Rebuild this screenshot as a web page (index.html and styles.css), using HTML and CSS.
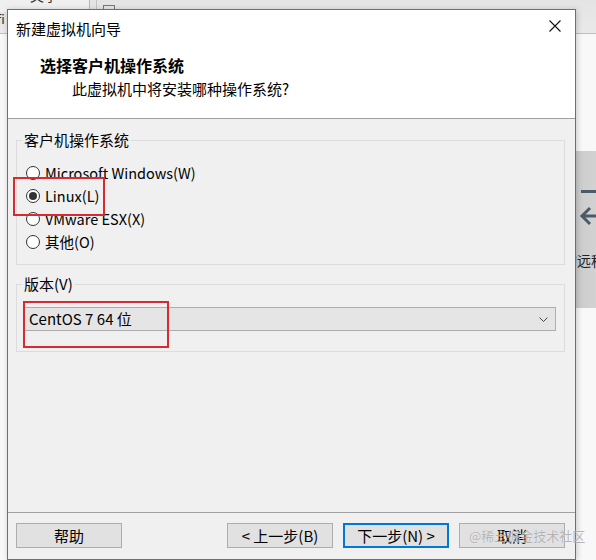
FILE: index.html
```html
<!DOCTYPE html>
<html lang="zh-CN">
<head>
<meta charset="utf-8">
<title>新建虚拟机向导</title>
<link rel="stylesheet" href="styles.css">
</head>
<body>
<div class="desktop">
  <div class="topbar">
    <div class="tab tab-active"><span class="tab-text">文字</span></div>
    <div class="tab tab-other"><span class="tab-icon"></span></div>
  </div>
  <span class="left-glyph">fi</span>
  <div class="side-band">
    <span class="band-bar"></span>
    <svg class="band-arrow" width="20" height="20" viewBox="0 0 20 20"><path d="M11 2 L3 10 L11 18 M3 10 H20" fill="none" stroke="#4b5b69" stroke-width="3"/></svg>
    <span class="band-text">的远程</span>
  </div>

  <div class="window">
    <div class="titlebar">
      <span class="title">新建虚拟机向导</span>
      <svg class="close" width="12" height="12" viewBox="0 0 12 12"><path d="M0.5 0.5 L11.5 11.5 M11.5 0.5 L0.5 11.5" stroke="#111" stroke-width="1.1" fill="none"/></svg>
    </div>
    <div class="header">
      <div class="h-title">选择客户机操作系统</div>
      <div class="h-sub">此虚拟机中将安装哪种操作系统?</div>
    </div>
    <div class="content">
      <div class="group group-os">
        <div class="group-label">客户机操作系统</div>
        <div class="radios">
          <div class="radio-row"><span class="radio"></span><span>Microsoft Windows(W)</span></div>
          <div class="radio-row"><span class="radio checked"></span><span>Linux(L)</span></div>
          <div class="radio-row"><span class="radio"></span><span>VMware ESX(X)</span></div>
          <div class="radio-row"><span class="radio"></span><span>其他(O)</span></div>
        </div>
      </div>
      <div class="group group-ver">
        <div class="group-label">版本(V)</div>
        <div class="select">
          <span>CentOS 7 64 位</span>
          <svg class="chev" width="9" height="5" viewBox="0 0 9 5"><path d="M0.5 0.5 L4.5 4.5 L8.5 0.5" fill="none" stroke="#444" stroke-width="1"/></svg>
        </div>
      </div>
    </div>
    <div class="footer">
      <button class="btn">帮助</button>
      <div class="btn-group">
        <button class="btn">&lt; 上一步(B)</button>
        <button class="btn btn-default">下一步(N) &gt;</button>
        <button class="btn">取消</button>
      </div>
    </div>
  </div>

  <div class="mark mark-linux"></div>
  <div class="mark mark-ver"></div>
  <div class="watermark">@稀土掘金技术社区</div>
</div>
</body>
</html>
```

FILE: styles.css
```css
html, body {
  margin: 0;
  padding: 0;
}
body {
  font-family: "Noto Sans CJK SC", "Noto Sans", sans-serif;
  color: #000;
}
.desktop {
  position: relative;
  width: 596px;
  height: 560px;
  overflow: hidden;
  background: #f8f8f8;
}
.topbar {
  position: absolute;
  left: 0;
  top: 0;
  width: 596px;
  height: 33px;
  background: linear-gradient(#e4e4e4, #e9e9e9);
  border-bottom: 1px solid #a9c4df;
  display: flex;
  align-items: flex-start;
}
.tab {
  height: 12px;
  box-sizing: border-box;
}
.tab-active {
  width: 90px;
  background: #efefef;
  border-right: 1px solid #b8b8b8;
  position: relative;
  overflow: hidden;
}
.tab-text {
  position: absolute;
  left: 30px;
  top: -15px;
  font-size: 14px;
  color: #333;
}
.tab-other {
  margin-left: 6px;
  width: 100px;
  border-left: 1px solid #c4c4c4;
  position: relative;
}
.tab-icon {
  position: absolute;
  left: 6px;
  top: 5px;
  width: 12px;
  height: 10px;
  border: 1px solid #777;
  box-sizing: border-box;
}
.left-glyph {
  position: absolute;
  left: -3px;
  top: 9px;
  font-size: 13px;
  color: #333;
}
.side-band {
  position: absolute;
  left: 560px;
  top: 151px;
  width: 36px;
  height: 157px;
  background: linear-gradient(to right, #b9b9b9, #cbcbcb 40%, #d2d2d2);
}
.band-bar {
  position: absolute;
  left: 21px;
  top: 39px;
  width: 20px;
  height: 3px;
  background: #4b5b69;
}
.band-arrow {
  position: absolute;
  left: 19px;
  top: 55px;
}
.band-text {
  position: absolute;
  left: 3px;
  top: 99px;
  font-size: 14px;
  color: #222;
  white-space: nowrap;
}
.window {
  position: absolute;
  left: 7px;
  top: 9px;
  width: 569px;
  height: 551px;
  box-sizing: border-box;
  border: 1px solid #6f6f6f;
  background: #f0f0f0;
  display: flex;
  flex-direction: column;
  box-shadow: 1px 1px 6px rgba(0, 0, 0, 0.2);
}
.titlebar {
  height: 30px;
  background: #fff;
  display: flex;
  align-items: center;
  justify-content: space-between;
  padding: 7px 14px 0 8px;
  box-sizing: border-box;
  flex-shrink: 0;
}
.title {
  font-size: 15px;
  line-height: 20px;
}
.close {
  display: block;
  margin-top: -6px;
}
.header {
  height: 79px;
  box-sizing: border-box;
  background: #fff;
  border-bottom: 1px solid #a0a0a0;
  padding-top: 15px;
  flex-shrink: 0;
}
.h-title {
  font-size: 16px;
  line-height: 20px;
  font-weight: bold;
  margin-left: 32px;
}
.h-sub {
  font-size: 15px;
  line-height: 20px;
  margin-top: 4px;
  margin-left: 64px;
}
.content {
  flex: 1;
  display: flex;
  flex-direction: column;
}
.group {
  border: 1px solid #dcdcdc;
  margin: 0 10px 0 8px;
  font-size: 15px;
}
.group-os {
  margin-top: 21px;
  padding-bottom: 11px;
}
.group-ver {
  margin-top: 19px;
  padding-bottom: 20px;
}
.group-label {
  width: fit-content;
  margin: -11px 0 0 5px;
  padding: 0 2px;
  line-height: 20px;
  background: #f0f0f0;
}
.radios {
  margin-top: 11px;
  padding-left: 9px;
  font-size: 14.5px;
}
.radio-row {
  height: 23px;
  display: flex;
  align-items: center;
  gap: 5px;
  line-height: 20px;
}
.radio {
  width: 14px;
  height: 14px;
  box-sizing: border-box;
  border: 1px solid #333;
  border-radius: 50%;
  background: #fff;
  display: flex;
  align-items: center;
  justify-content: center;
  flex-shrink: 0;
}
.radio.checked::after {
  content: "";
  width: 8px;
  height: 8px;
  border-radius: 50%;
  background: #333;
}
.select {
  margin: 13px 8px 0 7px;
  height: 24px;
  box-sizing: border-box;
  border: 1px solid #adadad;
  background: #e5e5e5;
  display: flex;
  align-items: center;
  justify-content: space-between;
  padding: 0 7px 0 4px;
  line-height: 20px;
}
.chev {
  display: block;
}
.footer {
  flex-shrink: 0;
  height: 47px;
  box-sizing: border-box;
  border-top: 1px solid #a0a0a0;
  padding: 10px 10px 0 8px;
  display: flex;
  justify-content: space-between;
  align-items: flex-start;
}
.btn-group {
  display: flex;
  gap: 10px;
}
.btn {
  width: 106px;
  height: 25px;
  box-sizing: border-box;
  border: 1px solid #adadad;
  background: #e1e1e1;
  font-family: "Noto Sans CJK SC", "Noto Sans", sans-serif;
  font-size: 15px;
  line-height: 20px;
  color: #000;
  padding: 0;
  margin: 0;
}
.btn-default {
  border: 2px solid #0078d7;
}
.mark {
  position: absolute;
  border: 2px solid #d82a33;
  box-sizing: border-box;
}
.mark-linux {
  left: 13px;
  top: 177px;
  width: 92px;
  height: 39px;
}
.mark-ver {
  left: 23px;
  top: 301px;
  width: 146px;
  height: 47px;
}
.watermark {
  position: absolute;
  left: 469px;
  top: 527px;
  font-size: 13px;
  line-height: 18px;
  color: rgba(150, 150, 150, 0.7);
  text-shadow: 0 0 1px rgba(255, 255, 255, 0.8);
  white-space: nowrap;
}
```
